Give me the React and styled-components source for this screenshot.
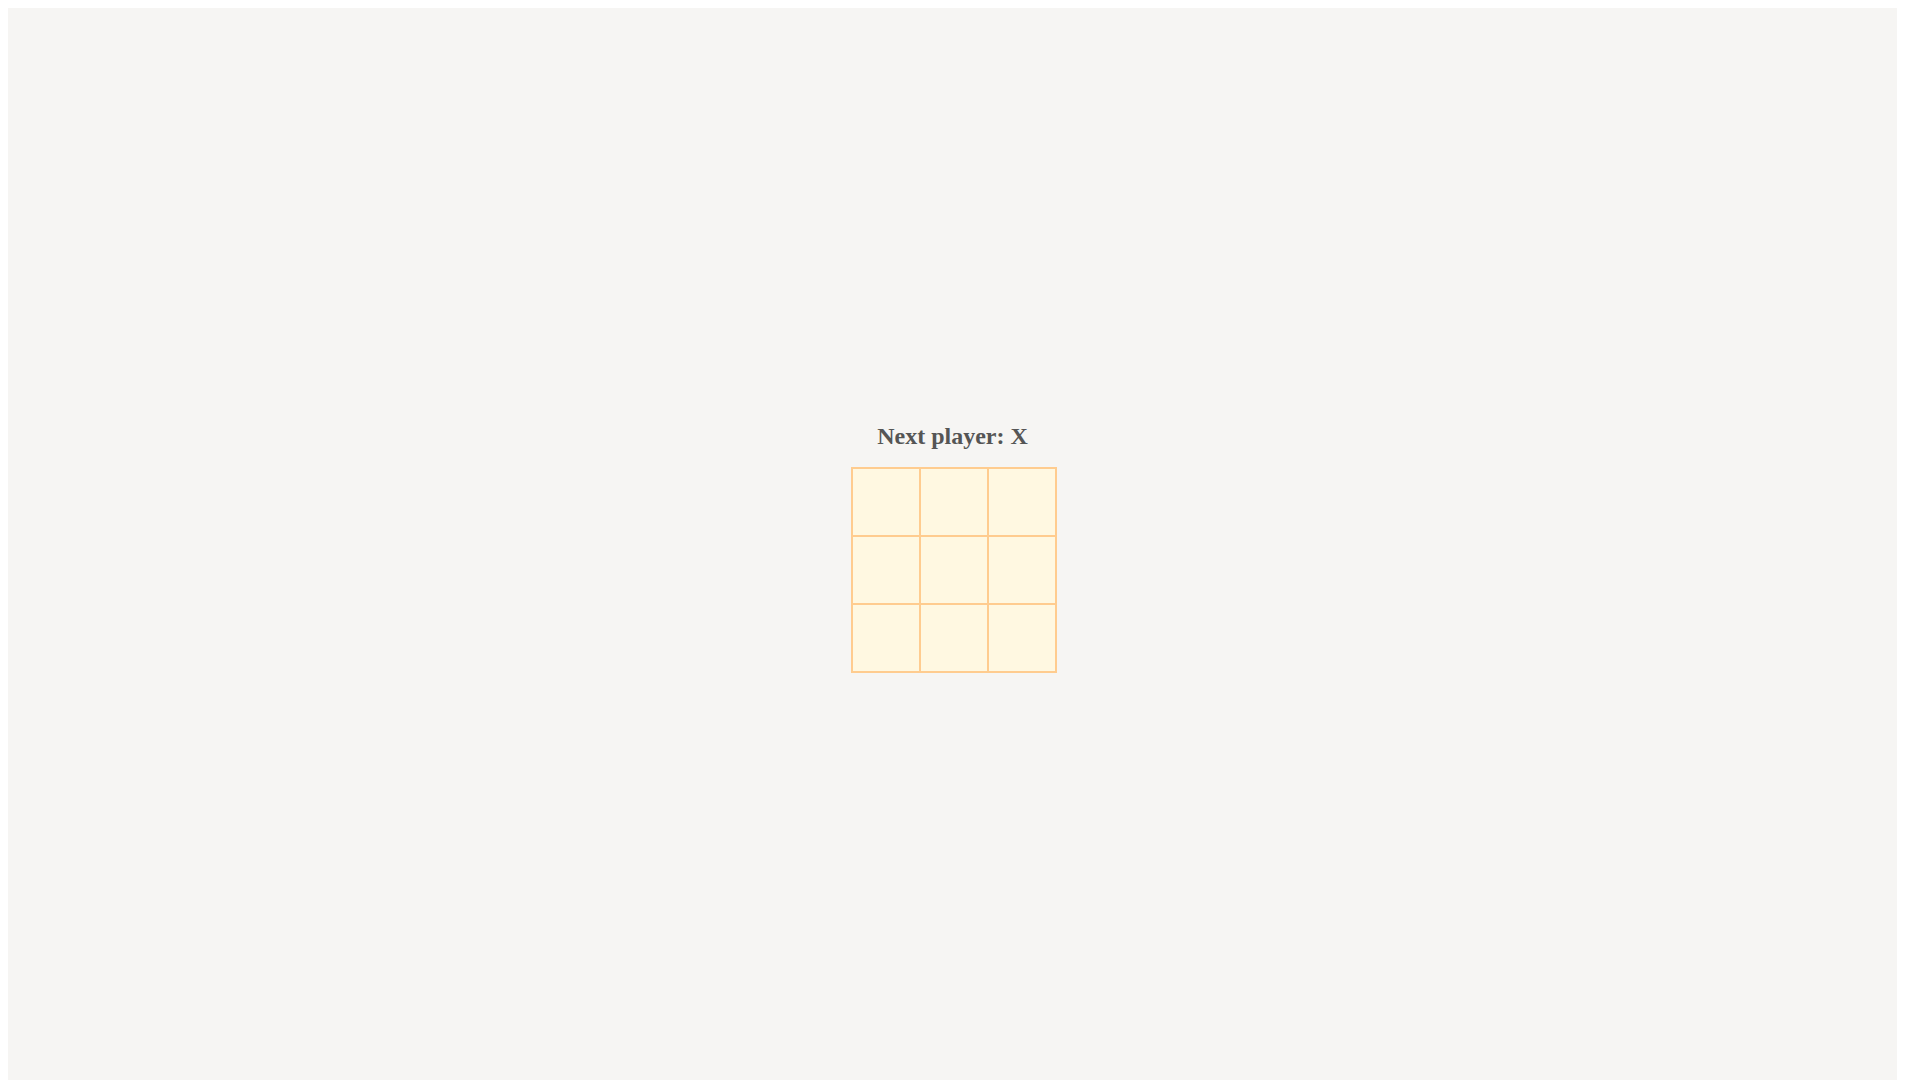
import { useState } from 'react';
import styled, { createGlobalStyle } from 'styled-components';

const GlobalStyle = createGlobalStyle`
  body {
    margin: 8px 23px 8px 8px;
    font-family: "Liberation Serif", "Times New Roman", serif;
  }
`;

const Page = styled.div`
  min-height: 100vh;
  background-color: #f6f5f3;
  display: flex;
  flex-direction: column;
  align-items: center;
  justify-content: center;
`;

const Status = styled.div`
  color: #555;
  font-size: 24px;
  font-weight: bold;
  margin-bottom: 19px;
`;

const Board = styled.div`
  display: flex;
  flex-direction: column;
`;

const BoardRow = styled.div`
  display: flex;
`;

const Square = styled.button`
  box-sizing: border-box;
  width: 70px;
  height: 70px;
  margin: -2px -2px 0 0;
  padding: 0;
  background-color: #fff8e1;
  border: 2px solid #ffcc8f;
  color: #555;
  font-family: inherit;
  font-size: 36px;
  font-weight: bold;
  cursor: pointer;

  &:focus {
    outline: none;
  }
`;

function winnerOf(squares) {
  const lines = [
    [0, 1, 2], [3, 4, 5], [6, 7, 8],
    [0, 3, 6], [1, 4, 7], [2, 5, 8],
    [0, 4, 8], [2, 4, 6],
  ];
  for (const [a, b, c] of lines) {
    if (squares[a] && squares[a] === squares[b] && squares[a] === squares[c]) {
      return squares[a];
    }
  }
  return null;
}

export default function App() {
  const [squares, setSquares] = useState(Array(9).fill(null));
  const [xIsNext, setXIsNext] = useState(true);

  const winner = winnerOf(squares);
  const status = winner
    ? `Winner: ${winner}`
    : `Next player: ${xIsNext ? 'X' : 'O'}`;

  const handleClick = (i) => {
    if (squares[i] || winner) return;
    const next = squares.slice();
    next[i] = xIsNext ? 'X' : 'O';
    setSquares(next);
    setXIsNext(!xIsNext);
  };

  return (
    <>
      <GlobalStyle />
      <Page>
        <Status>{status}</Status>
        <Board>
          {[0, 1, 2].map((row) => (
            <BoardRow key={row}>
              {[0, 1, 2].map((col) => {
                const i = row * 3 + col;
                return (
                  <Square key={i} onClick={() => handleClick(i)}>
                    {squares[i]}
                  </Square>
                );
              })}
            </BoardRow>
          ))}
        </Board>
      </Page>
    </>
  );
}
